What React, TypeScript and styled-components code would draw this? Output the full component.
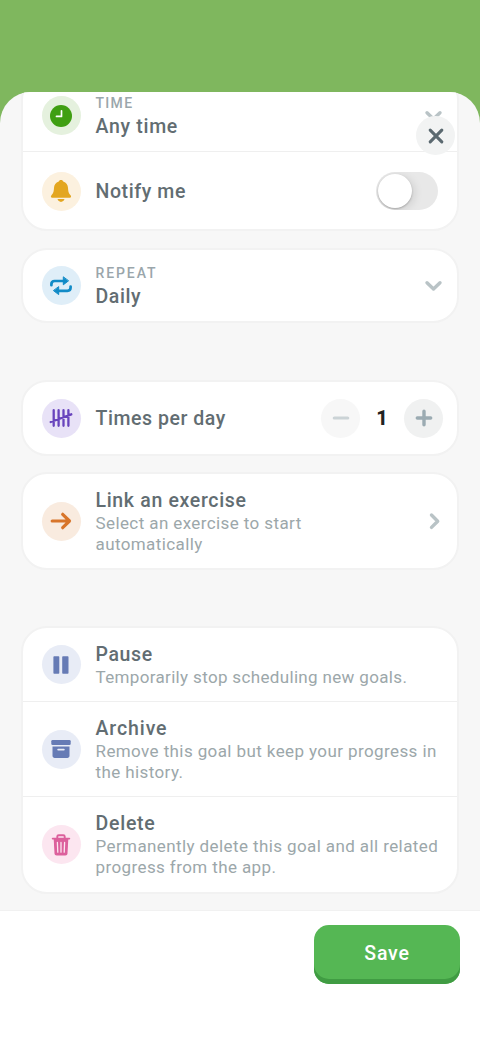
import React from "react";
import styled, { createGlobalStyle } from "styled-components";

const GlobalStyle = createGlobalStyle`
  * { box-sizing: border-box; }
  body { margin: 0; background: #7fb75e; font-family: Roboto, "Liberation Sans", sans-serif; }
  button { font: inherit; border: 0; padding: 0; }
`;

const Screen = styled.div`
  height: 1040px;
  padding-top: 92px;
  background: #7fb75e;
`;
const Sheet = styled.main`
  position: relative;
  display: flex;
  flex-direction: column;
  height: 948px;
  overflow: hidden;
  background: #f7f7f7;
  border-radius: 31px 31px 0 0;
`;
const Scroll = styled.div`
  flex: 1;
  display: flex;
  flex-direction: column;
  overflow: hidden;
  padding: 0 21px;
`;
const Card = styled.section<{ $gap?: number }>`
  flex: none;
  margin-top: ${(p) => p.$gap ?? 17}px;
  background: #fff;
  border: 2px solid #f2f2f2;
  border-radius: 26px;
`;
const Row = styled.div<{ $h: number; $top?: number }>`
  display: flex;
  align-items: center;
  height: ${(p) => p.$h}px;
  padding: ${(p) => p.$top ?? 0}px 14px 0 18.5px;
  & + & { border-top: 1px solid #efefef; }
`;
const Badge = styled.div<{ $bg: string }>`
  flex: none;
  display: grid;
  place-items: center;
  width: 39px;
  height: 39px;
  margin-right: 15px;
  border-radius: 50%;
  background: ${(p) => p.$bg};
`;
const Copy = styled.div`
  flex: 1;
  white-space: nowrap;
`;
const Overline = styled.div<{ $ls?: number }>`
  height: 21px;
  font-size: 14px;
  line-height: 20px;
  font-weight: 500;
  letter-spacing: ${(p) => p.$ls ?? 1.3}px;
  color: #9aa6ab;
`;
const Title = styled.div<{ $ls?: number }>`
  font-size: 19.5px;
  line-height: 25px;
  font-weight: 500;
  letter-spacing: ${(p) => p.$ls ?? 0.6}px;
  color: #626d72;
`;
const Detail = styled.div<{ $ls?: number }>`
  font-size: 17px;
  line-height: 21px;
  letter-spacing: ${(p) => p.$ls ?? 0.4}px;
  color: #9ca7aa;
`;
const Switch = styled.button`
  width: 62px;
  height: 38px;
  margin-right: 5px;
  padding: 0 1.5px;
  border-radius: 19px;
  background: #e8e8e8;
  overflow: hidden;
`;
const Knob = styled.span`
  display: block;
  width: 34.5px;
  height: 34.5px;
  border-radius: 50%;
  background: #fff;
  box-shadow: 0 1px 2px #a6a6a6, 3px 2px 9px rgba(0, 0, 0, 0.1);
`;
const RoundButton = styled.button<{ $bg: string }>`
  display: grid;
  place-items: center;
  width: 39px;
  height: 39px;
  border-radius: 50%;
  background: ${(p) => p.$bg};
`;
const Count = styled.span`
  width: 44px;
  text-align: center;
  font-size: 20px;
  font-weight: 800;
  color: #222;
`;
const Close = styled(RoundButton)`
  position: absolute;
  top: 24px;
  right: 25px;
`;
const Footer = styled.footer`
  display: flex;
  justify-content: flex-end;
  align-items: flex-start;
  height: 130px;
  padding: 14px 20px 0;
  border-top: 1px solid #f1f1f1;
  background: #fff;
`;
const Save = styled.button`
  width: 146px;
  height: 59px;
  padding-bottom: 3px;
  border-radius: 15px;
  background: #55b754;
  box-shadow: inset 0 -5px #409c43;
  color: #fff;
  font-size: 19.5px;
  font-weight: 500;
  letter-spacing: 0.8px;
`;

const Chevron = ({ right = false }: { right?: boolean }) => (
  <svg width="20" height="20" viewBox="0 0 20 20" fill="none" stroke="#b9c3c6" strokeWidth="3.4" strokeLinecap="round" strokeLinejoin="round">
    <path d={right ? "M8.5 4l6.200 6.200-6.200 6.200" : "M4 6.700l6.500 6.300 6.500-6.300"} />
  </svg>
);

const Glyph = ({ color, children }: { color: string; children: React.ReactNode }) => (
  <svg width="24" height="24" viewBox="0 0 24 24" fill="none" stroke={color} strokeLinecap="round" strokeLinejoin="round">
    {children}
  </svg>
);

export default function App() {
  return (
    <>
      <GlobalStyle />
      <Screen>
        <Sheet>
          <Scroll>
            <Card $gap={-18}>
              <Row $h={75} $top={4}>
                <Badge $bg="#e5f1de">
                  <Glyph color="#fff">
                    <circle cx="12" cy="12" r="11" fill="#3f9f12" stroke="none" />
                    <path d="M12.500 6.800v5.600H7.500" strokeWidth="1.700" />
                  </Glyph>
                </Badge>
                <Copy>
                  <Overline>TIME</Overline>
                  <Title $ls={0.7}>Any time</Title>
                </Copy>
                <Chevron />
              </Row>
              <Row $h={78} $top={1}>
                <Badge $bg="#fcf1df">
                  <Glyph color="#e3a620">
                    <path fill="#e3a620" stroke="none" d="M12 1c1.300 0 2 .7 2.200 1.400 3.100 1 4.700 3.400 4.800 6.400.2 4.400 1 6 2.500 7.400 1.100 1.100.6 2.500-.8 2.500H3.300c-1.400 0-1.900-1.400-.8-2.500C4 14.800 4.800 13.200 5 8.800c.1-3 1.700-5.400 4.800-6.400C10 1.700 10.700 1 12 1zM8.500 20.100h7c-.5 1.800-1.800 2.800-3.500 2.800s-3-1-3.500-2.800z" />
                  </Glyph>
                </Badge>
                <Copy><Title>Notify me</Title></Copy>
                <Switch aria-label="Notify me"><Knob /></Switch>
              </Row>
            </Card>

            <Card>
              <Row $h={71}>
                <Badge $bg="#dfeef8">
                  <Glyph color="#118bc7">
                    <path strokeWidth="2.700" d="M2.400 11.200v-1c0-2 1.200-3.200 3.200-3.200H15M21.600 12.600v1c0 2-1.200 3.200-3.200 3.200H9" />
                    <path fill="#118bc7" strokeWidth="1" d="M14.300 3.200v7.600L19.300 7zM9.700 13v7.600l-5-3.800z" />
                  </Glyph>
                </Badge>
                <Copy>
                  <Overline $ls={1.9}>REPEAT</Overline>
                  <Title>Daily</Title>
                </Copy>
                <Chevron />
              </Row>
            </Card>

            <Card $gap={57}>
              <Row $h={72}>
                <Badge $bg="#e8e2f7">
                  <Glyph color="#6844bd">
                    <path strokeWidth="2.300" d="M4.700 4.200v15.600M9.600 4.200v15.600M14.500 4.200v15.600M19.400 4.200v15.600M1.700 16L22.300 8.300" />
                  </Glyph>
                </Badge>
                <Copy><Title $ls={0.55}>Times per day</Title></Copy>
                <RoundButton $bg="#f7f7f7" aria-label="Fewer">
                  <Glyph color="#cbd3d6"><path strokeWidth="3.200" d="M5.300 12h13.400" /></Glyph>
                </RoundButton>
                <Count>1</Count>
                <RoundButton $bg="#f0f1f1" aria-label="More">
                  <Glyph color="#9babb2"><path strokeWidth="3.400" d="M5.300 12h13.400M12 5.300v13.400" /></Glyph>
                </RoundButton>
              </Row>
            </Card>

            <Card $gap={16}>
              <Row $h={94}>
                <Badge $bg="#f9ebdf">
                  <Glyph color="#d8752a"><path strokeWidth="3.200" d="M3.200 12h17M13.700 5.300l6.800 6.700-6.800 6.700" /></Glyph>
                </Badge>
                <Copy>
                  <Title $ls={0.67}>Link an exercise</Title>
                  <Detail>Select an exercise to start<br />automatically</Detail>
                </Copy>
                <Chevron right />
              </Row>
            </Card>

            <Card $gap={56}>
              <Row $h={73}>
                <Badge $bg="#e8ecf6">
                  <Glyph color="#667bb5"><path fill="#667bb5" strokeWidth="1.600" d="M5.200 4h4.300v16H5.200zM14 4h4.700v16H14z" /></Glyph>
                </Badge>
                <Copy>
                  <Title>Pause</Title>
                  <Detail $ls={0.34}>Temporarily stop scheduling new goals.</Detail>
                </Copy>
              </Row>
              <Row $h={95}>
                <Badge $bg="#e8ecf6">
                  <Glyph color="#667bb5">
                    <rect x="2.300" y="3" width="19.400" height="5" rx="1.300" fill="#667bb5" stroke="none" />
                    <path fill="#667bb5" stroke="none" d="M3.500 9.600h17v9.200c0 1.300-.9 2.200-2.200 2.200H5.700c-1.300 0-2.200-.9-2.200-2.200z" />
                    <path stroke="#e8ecf6" strokeWidth="1.900" d="M9.200 12.600h5.600" />
                  </Glyph>
                </Badge>
                <Copy>
                  <Title $ls={0.9}>Archive</Title>
                  <Detail>Remove this goal but keep your progress in<br />the history.</Detail>
                </Copy>
              </Row>
              <Row $h={96}>
                <Badge $bg="#fce6f0">
                  <Glyph color="#dc609c">
                    <path strokeWidth="1.900" d="M3.700 5.600h16.600M8.300 5V3.600c0-.9.500-1.400 1.400-1.400h4.600c.9 0 1.400.5 1.400 1.400V5" />
                    <path fill="#dc609c" stroke="none" d="M4.700 6h14.600L18.500 20.600c-.1 1.300-.9 2-2.200 2H7.700c-1.300 0-2.100-.7-2.200-2z" />
                    <path stroke="#fce6f0" strokeWidth="1.300" d="M8.400 9.500l.4 9.700M12 9.500v9.700M15.600 9.500l-.4 9.700" />
                  </Glyph>
                </Badge>
                <Copy>
                  <Title $ls={0.75}>Delete</Title>
                  <Detail>Permanently delete this goal and all related<br />progress from the app.</Detail>
                </Copy>
              </Row>
            </Card>
          </Scroll>
          <Footer><Save>Save</Save></Footer>
          <Close $bg="#f2f3f3" aria-label="Close">
            <Glyph color="#5b6970"><path strokeWidth="3.100" d="M6.200 6.200l11.600 11.600M17.800 6.200L6.200 17.800" /></Glyph>
          </Close>
        </Sheet>
      </Screen>
    </>
  );
}
